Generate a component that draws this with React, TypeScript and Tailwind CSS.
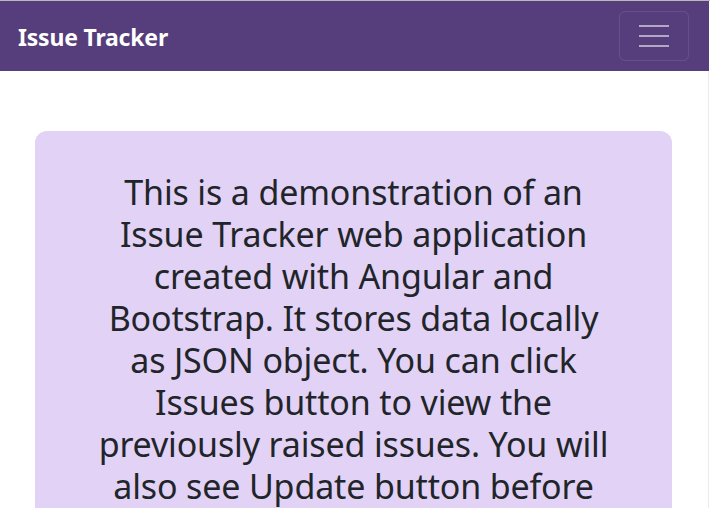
import React from 'react';

const LINES = [
  'This is a demonstration of an',
  'Issue Tracker web application',
  'created with Angular and',
  'Bootstrap. It stores data locally',
  'as JSON object. You can click',
  'Issues button to view the',
  'previously raised issues. You will',
  'also see Update button before',
  'each issue to edit its details.',
];

const App: React.FC = () => {
  return (
    <div className="min-h-screen bg-white font-['Noto_Sans',sans-serif] text-[#212529] border-t border-[#b9b9b9]">
      <nav className="h-[70px] w-[709px] bg-[#563d7c] flex items-center justify-between pl-[18px] pr-[20px]">
        <span className="text-white font-bold text-[23px] tracking-[-0.2px] leading-none mt-[2px]">Issue Tracker</span>
        <button className="w-[70px] h-[50px] rounded-md border border-white/10 flex flex-col items-center justify-center gap-[8px]">
          <span className="block w-[30px] h-[2px] bg-white/55" />
          <span className="block w-[30px] h-[2px] bg-white/55" />
          <span className="block w-[30px] h-[2px] bg-white/55" />
        </button>
      </nav>
      <main className="w-[709px] border-r border-[#ececec] pl-[35px] pr-[36px] pt-[60px]">
        <div className="bg-[#e1d2f6] rounded-xl px-6 pt-[40px] pb-10 text-center">
          <h2 className="text-[34px] tracking-[-0.15px] leading-[42px] font-normal">
            {LINES.map((line, i) => (
              <React.Fragment key={i}>
                {line}
                <br />
              </React.Fragment>
            ))}
          </h2>
        </div>
      </main>
    </div>
  );
};

export default App;
